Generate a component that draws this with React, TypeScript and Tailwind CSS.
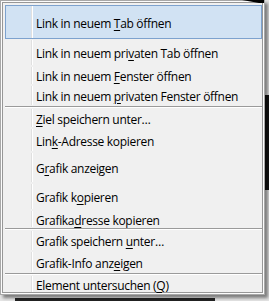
import React from "react";

type Item = { kind: "item"; parts: [string, string, string]; h: number; active?: boolean };
type Sep = { kind: "sep" };
type Row = Item | Sep;

const rows: Row[] = [
  { kind: "item", parts: ["Link in neuem ", "T", "ab öffnen"], h: 34, active: true },
  { kind: "item", parts: ["Link in neuem pri", "v", "aten Tab öffnen"], h: 27 },
  { kind: "item", parts: ["Link in neuem ", "F", "enster öffnen"], h: 19 },
  { kind: "item", parts: ["Link in neuem ", "p", "rivaten Fenster öffnen"], h: 21 },
  { kind: "sep" },
  { kind: "item", parts: ["", "Z", "iel speichern unter…"], h: 20 },
  { kind: "item", parts: ["Lin", "k", "-Adresse kopieren"], h: 24 },
  { kind: "item", parts: ["G", "r", "afik anzeigen"], h: 31 },
  { kind: "item", parts: ["Grafik k", "o", "pieren"], h: 27 },
  { kind: "item", parts: ["Grafika", "d", "resse kopieren"], h: 18 },
  { kind: "sep" },
  { kind: "item", parts: ["Grafik speichern ", "u", "nter…"], h: 21 },
  { kind: "item", parts: ["Grafik-Info anz", "e", "igen"], h: 22 },
  { kind: "sep" },
  { kind: "item", parts: ["Element untersuchen (", "Q", ")"], h: 18 },
];

export default function App() {
  return (
    <div className="relative w-[269px] h-[301px] overflow-hidden bg-[#e4e4e4]">
      <div className="absolute right-0 top-[95px] w-[4px] h-[95px] bg-[#111]" />
      <div className="absolute left-[15px] bottom-0 w-[200px] h-[3px] bg-[#222]" />
      <div
        className="relative w-[265px] h-[295px] border border-[#a8a8a8] bg-[#f0f0f0] pt-[4px] pb-[1px] pl-[4px] pr-[2px] shadow-[inset_0_0_0_1px_#fcfcfc,inset_0_0_0_2px_#979797,3px_3px_3px_rgba(0,0,0,0.45)]"
        style={{ fontFamily: '"Open Sans", "Noto Sans", sans-serif' }}
      >
        <div className="flex flex-col">
          {rows.map((r, i) =>
            r.kind === "sep" ? (
              <div key={i} className="h-[2px] border-t border-[#9a9a9a] bg-white" />
            ) : (
              <div
                key={i}
                style={{ height: r.h }}
                className={
                  "flex items-stretch " +
                  (r.active ? "border border-[#7da2ce] bg-[#d1e2f3]" : "border border-transparent")
                }
              >
                <div className="w-[26px] shrink-0 border-r border-[#e0e0e0] shadow-[1px_0_0_#ffffff]" />
                <div className="flex items-center pl-[4px] pt-[3px] text-[12px] leading-none tracking-[-0.3px] text-black whitespace-nowrap">
                  <span>
                    {r.parts[0]}
                    <span className="underline underline-offset-[2px]">{r.parts[1]}</span>
                    {r.parts[2]}
                  </span>
                </div>
              </div>
            )
          )}
        </div>
      </div>
      <svg className="absolute left-[240px] top-0" width="26" height="4" viewBox="0 0 26 4">
        <polygon points="2,0 24,0 24,3 19,3" fill="#000" />
      </svg>
    </div>
  );
}
